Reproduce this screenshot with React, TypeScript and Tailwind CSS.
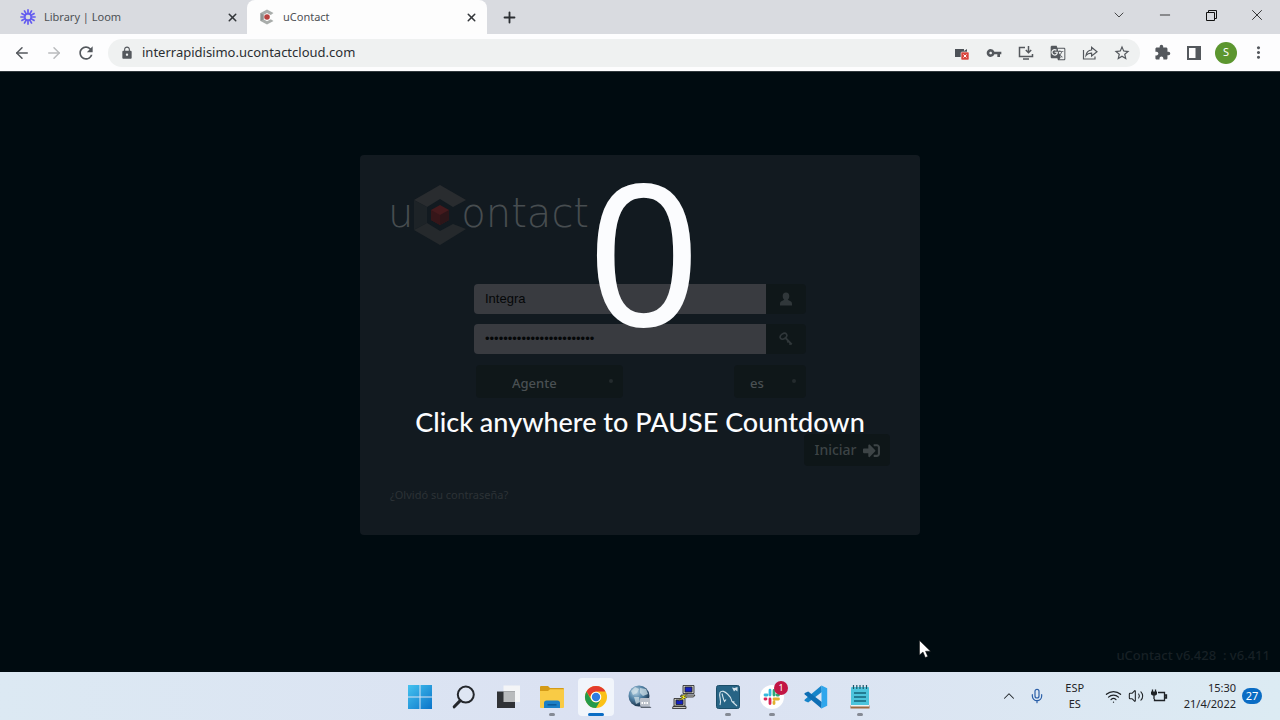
import { type ReactNode } from 'react';
import {
    ArrowLeft,
    ArrowRight,
    ChevronDown,
    ChevronUp,
    Mic,
    Minus,
    Plus,
    Volume2,
    Wifi,
    X,
} from 'lucide-react';
import { FaSignInAlt } from 'react-icons/fa';
import {
    MdExtension,
    MdGTranslate,
    MdLock,
    MdMoreVert,
    MdRefresh,
    MdStarBorder,
    MdVpnKey,
} from 'react-icons/md';

type IconButtonProperties = {
    label: string;
    className?: string;
    children: ReactNode;
};

const IconButton: React.FC<IconButtonProperties> = ({
    label,
    className = 'w-8 h-8',
    children,
}) => (
    <button
        type="button"
        aria-label={label}
        className={`flex shrink-0 items-center justify-center ${className}`}
    >
        {children}
    </button>
);

const LoomIcon: React.FC = () => (
    <svg viewBox="0 0 16 16" className="h-4 w-4" stroke="#635bf0" strokeWidth="1.7">
        {[0, 30, 60, 90, 120, 150].map((angle) => (
            <path
                key={angle}
                d="M8 0.3V5.4M8 10.6V15.7"
                transform={`rotate(${angle} 8 8)`}
            />
        ))}
        <circle cx="8" cy="8" r="3.2" fill="none" strokeWidth="1.4" />
    </svg>
);

const ContactFavicon: React.FC = () => (
    <svg viewBox="0 0 16 16" className="h-4 w-4">
        <path d="M8 0.5L14.5 4L11.8 6L8 4L4.6 6V10.2L8 12.2L11.8 10.2L14.5 12L8 15.6L1.5 12V4Z" fill="#a9adab" />
        <path d="M1.5 4L4.6 6V10.2L1.5 12Z" fill="#8e9391" />
        <circle cx="8" cy="8" r="2.8" fill="#b8423f" />
    </svg>
);

const TabStrip: React.FC = () => (
    <div className="flex h-[34px] bg-[#d9dbe0] text-[11px] text-[#4d5155]">
        <div className="flex w-[247px] items-center pl-5 pr-[7px]">
            <LoomIcon />
            <span className="ml-2 flex-1">Library | Loom</span>
            <IconButton label="Close Library tab" className="h-4 w-4">
                <X size={13} strokeWidth={2.8} color="#33363a" />
            </IconButton>
        </div>
        <div className="flex w-[240px] items-center rounded-t-lg bg-[#fdfdfd] pl-3 pr-2">
            <ContactFavicon />
            <span className="ml-2 flex-1">uContact</span>
            <IconButton label="Close uContact tab" className="h-4 w-4">
                <X size={13} strokeWidth={2.8} color="#33363a" />
            </IconButton>
        </div>
        <IconButton label="New tab" className="ml-2 w-7">
            <Plus size={17} strokeWidth={2.6} color="#2c2f33" />
        </IconButton>
        <div className="ml-auto flex pb-1 text-[#222]">
            <IconButton label="Search tabs" className="w-[46px]">
                <ChevronDown size={16} strokeWidth={1.2} />
            </IconButton>
            <IconButton label="Minimize" className="w-[46px]">
                <Minus size={16} strokeWidth={1.3} />
            </IconButton>
            <IconButton label="Restore" className="w-[46px]">
                <svg viewBox="0 0 11 11" className="h-[11px] w-[11px]" fill="none" stroke="#111">
                    <path d="M0.5 2.5H8.5V10.5H0.5ZM2.5 2.5V0.5H10.5V8.5H8.5" />
                </svg>
            </IconButton>
            <IconButton label="Close" className="w-[46px]">
                <X size={18} strokeWidth={1.2} />
            </IconButton>
        </div>
    </div>
);

const Toolbar: React.FC = () => (
    <div className="flex h-[37px] items-center bg-[#fdfdfe] px-1.5 text-[#54585d]">
        <IconButton label="Back">
            <ArrowLeft size={18} strokeWidth={2} />
        </IconButton>
        <IconButton label="Forward">
            <ArrowRight size={18} strokeWidth={2} color="#b9bbbd" />
        </IconButton>
        <IconButton label="Reload">
            <MdRefresh size={20} />
        </IconButton>
        <div className="mx-1.5 flex h-7 flex-1 items-center rounded-full bg-[#eff1f1] pl-3 pr-0.5">
            <MdLock size={14} />
            <input
                aria-label="Address"
                defaultValue="interrapidisimo.ucontactcloud.com"
                className="ml-2 min-w-0 flex-1 bg-transparent text-[13px] text-[#2b2e31] outline-none"
            />
            <IconButton label="Camera blocked">
                <svg viewBox="0 0 16 16" className="h-4 w-4">
                    <path d="M1 4H10V6L13 4V12H1Z" fill="#4c5157" />
                    <rect x="7" y="7" width="8" height="8" rx="1" fill="#d9443c" stroke="#eff1f1" strokeWidth="0.6" />
                    <path d="M9.5 9.5L12.5 12.5M12.5 9.5L9.5 12.5" stroke="#fff" />
                </svg>
            </IconButton>
            <IconButton label="Passwords">
                <MdVpnKey size={16} />
            </IconButton>
            <IconButton label="Install app">
                <svg viewBox="0 0 16 16" className="h-4 w-4" fill="none" stroke="currentColor" strokeWidth="1.5">
                    <path d="M7 2.5H1.5V11.5H14.5V9M5 14H11M10.5 1V7.5M7.8 5L10.5 7.7L13.2 5" />
                </svg>
            </IconButton>
            <IconButton label="Translate">
                <MdGTranslate size={16} />
            </IconButton>
            <IconButton label="Share">
                <svg viewBox="0 0 16 16" className="h-4 w-4" fill="none" stroke="currentColor" strokeWidth="1.2">
                    <path d="M1.5 5V14H13V11.5M4 10.5C4.5 6.8 6.5 5.2 9.6 5V2.2L15 6.8L9.6 11V8.2C7 8.1 5.2 8.9 4 10.5Z" />
                </svg>
            </IconButton>
            <IconButton label="Bookmark">
                <MdStarBorder size={18} />
            </IconButton>
        </div>
        <IconButton label="Extensions">
            <MdExtension size={17} />
        </IconButton>
        <IconButton label="Side panel">
            <svg viewBox="0 0 14 14" className="h-3.5 w-3.5">
                <path d="M0 0H14V14H0ZM2 2V12H8.5V2Z" fill="currentColor" fillRule="evenodd" />
            </svg>
        </IconButton>
        <IconButton label="Profile">
            <span className="flex h-[22px] w-[22px] items-center justify-center rounded-full bg-[#5c962f] text-[11px] text-white">
                S
            </span>
        </IconButton>
        <IconButton label="Menu">
            <MdMoreVert size={19} />
        </IconButton>
    </div>
);

const Logo: React.FC = () => (
    <div className="flex h-[60px] items-center font-['DejaVu_Sans'] text-[40px] font-extralight leading-none text-[#474d50]">
        <span className="-ml-0.5 pb-1">u</span>
        <svg viewBox="0 0 54 60" className="h-[60px] w-[54px]">
            <path d="M27 0L53 15L40 22L27 14L14 22L1 15Z" fill="#292c2f" />
            <path d="M1 15L14 22V38L1 45Z" fill="#1d2327" />
            <path d="M1 45L14 38L27 46L40 39L53 44L27 60Z" fill="#25292c" />
            <path d="M27 20L36 25V35L27 40L18 35V25Z" fill="#451a1d" />
            <path d="M18 25L27 30V40L18 35Z" fill="#361619" />
            <path d="M27 30L36 25V35L27 40Z" fill="#2c1518" />
        </svg>
        <span className="-ml-1.5 pb-1">ontact</span>
    </div>
);

const UserIcon: React.FC = () => (
    <svg viewBox="0 0 14 14" className="h-3.5 w-3.5" fill="#30373a">
        <path d="M7 0.5C9.2 0.5 10.3 2 10.3 4C10.3 5.6 9.7 7 8.8 7.8L9.6 8.2L12 9.6C12.7 10 13 11 13 12V13.5H1V12C1 11 1.3 10 2 9.6L4.4 8.2L5.2 7.8C4.3 7 3.7 5.6 3.7 4C3.7 2 4.8 0.5 7 0.5Z" />
    </svg>
);

const KeyIcon: React.FC = () => (
    <svg viewBox="0 0 14 14" className="h-3.5 w-3.5" fill="none" stroke="#30373a">
        <ellipse cx="4.5" cy="4.2" rx="3.6" ry="2.5" strokeWidth="1.6" transform="rotate(-35 4.5 4.2)" />
        <path d="M6.5 6L12.8 12.3M8.3 10.3L10 8.6M10.4 12.6L12.3 10.8" strokeWidth="1.8" />
    </svg>
);

type FieldProperties = {
    label: string;
    type: string;
    value: string;
    icon: ReactNode;
};

const Field: React.FC<FieldProperties> = ({ label, type, value, icon }) => (
    <label className="flex h-[30px]">
        <input
            type={type}
            aria-label={label}
            defaultValue={value}
            className="min-w-0 flex-1 rounded-l bg-[#393b40] px-[11px] font-['Liberation_Sans'] text-[13px] text-[#050708] outline-none"
        />
        <span className="flex w-10 items-center justify-center rounded-r bg-[#0f1719]">
            {icon}
        </span>
    </label>
);

type PickerProperties = {
    label: string;
    value: string;
    className: string;
    selectClassName: string;
};

const Picker: React.FC<PickerProperties> = ({
    label,
    value,
    className,
    selectClassName,
}) => (
    <label className={`flex h-[33px] rounded bg-[#0f1719] ${className}`}>
        <select
            aria-label={label}
            className={`min-w-0 flex-1 appearance-none bg-transparent pt-1 text-[13px] font-medium text-[#4a5053] outline-none ${selectClassName}`}
        >
            <option>{value}</option>
        </select>
        <span className="mr-2.5 mt-3.5 h-1 w-1 rounded-full bg-[#242b2e]" />
    </label>
);

const LoginCard: React.FC = () => (
    <form className="mx-auto mt-[83px] flex w-full max-w-[560px] flex-col rounded bg-[#121a20] p-[30px]">
        <Logo />
        <div className="mx-auto mt-[39px] flex w-[332px] flex-col gap-2.5">
            <Field label="Usuario" type="text" value="Integra" icon={<UserIcon />} />
            <Field
                label="Clave"
                type="password"
                value="integra-contact-cloud-22"
                icon={<KeyIcon />}
            />
            <div className="flex justify-between pl-0.5 pt-px">
                <Picker label="Perfil" value="Agente" className="w-[147px]" selectClassName="pl-9" />
                <Picker label="Idioma" value="es" className="w-[72px]" selectClassName="pl-4" />
            </div>
        </div>
        <button
            type="button"
            className="mt-9 flex h-8 w-[86px] items-center justify-center gap-1.5 self-end rounded bg-[#0e1618] text-sm font-medium text-[#3d4446]"
        >
            Iniciar
            <FaSignInAlt size={17} />
        </button>
        <a href="#recuperar" className="mt-[19px] self-start text-[11px] leading-5 text-[#2c3236]">
            ¿Olvidó su contraseña?
        </a>
    </form>
);

const Countdown: React.FC = () => (
    <div className="absolute inset-0 flex flex-col items-center pt-[77px] text-[#fbfcfe]">
        <span className="pl-2 text-[198px] leading-[200px]">0</span>
        <p className="mt-[53px] font-['Lato'] text-[27px] font-medium leading-10">
            Click anywhere to PAUSE Countdown
        </p>
    </div>
);

const Page: React.FC = () => (
    <main className="relative flex flex-1 flex-col border-t border-[#30383c] bg-[#000b10]">
        <LoginCard />
        <p className="mt-auto self-end whitespace-pre pb-[7px] pr-2.5 text-[13px] font-medium text-[#172025]">
            uContact v6.428  : v6.411
        </p>
        <Countdown />
        <svg viewBox="0 0 12 19" className="absolute left-[919px] top-[568px] h-[19px] w-3">
            <path d="M0.5 0.5V15L4 12L6.3 17.5L8.8 16.5L6.5 11.2H11.5Z" fill="#fff" stroke="#111" strokeWidth="0.5" />
        </svg>
    </main>
);

const WindowsIcon: React.FC = () => (
    <svg viewBox="0 0 24 24" className="h-6 w-6">
        <defs>
            <linearGradient id="win" x1="0" y1="0" x2="1" y2="1" gradientUnits="objectBoundingBox">
                <stop offset="0" stopColor="#45c3f0" />
                <stop offset="1" stopColor="#0b74c9" />
            </linearGradient>
        </defs>
        <path d="M0 0H11.5V11.5H0ZM12.5 0H24V11.5H12.5ZM0 12.5H11.5V24H0ZM12.5 12.5H24V24H12.5Z" fill="url(#win)" />
    </svg>
);

const SearchIcon: React.FC = () => (
    <svg viewBox="0 0 24 24" className="h-6 w-6" fill="none" stroke="#24272c">
        <circle cx="13.8" cy="9.6" r="8" strokeWidth="2" fill="#dfe6f3" />
        <path d="M8.2 15.6L2.2 21.8" strokeWidth="3" strokeLinecap="round" />
    </svg>
);

const TaskViewIcon: React.FC = () => (
    <svg viewBox="0 0 24 24" className="h-6 w-6">
        <path d="M7.5 0.5H24V17H7.5Z" fill="#f4f5f7" />
        <path d="M1 6.5H19V23H1Z" fill="#303236" />
        <path d="M7.5 6.5H19V17H7.5Z" fill="#b9bbbd" />
    </svg>
);

const ExplorerIcon: React.FC = () => (
    <svg viewBox="0 0 26 24" className="h-6 w-[26px]">
        <path d="M1 2Q1 1 2 1H9L11 3H24Q25 3 25 4V10H1Z" fill="#d49b18" />
        <path d="M1 6H9L11 4.2H25V22Q25 23 24 23H2Q1 23 1 22Z" fill="#f9cb45" />
        <path d="M5 23V18Q5 15.5 7.5 15.5H18.5Q21 15.5 21 18V23Z" fill="#1b7fc6" />
        <path d="M8.5 19H17.5V20.6H8.5Z" fill="#0c5a9b" />
    </svg>
);

const ChromeIcon: React.FC = () => (
    <svg viewBox="0 0 24 24" className="h-6 w-6">
        <circle cx="12" cy="12" r="11" fill="#fbc116" />
        <path d="M2.47 6.5A11 11 0 0 1 21.53 6.5H12A5.5 5.5 0 0 0 7.24 9.25L6 12Z" fill="#e33b2e" />
        <path d="M2.47 6.5A11 11 0 0 0 12 23L16.76 14.75A5.5 5.5 0 0 1 7.24 14.75Z" fill="#249a4b" />
        <circle cx="12" cy="12" r="5.3" fill="#fff" />
        <circle cx="12" cy="12" r="4.2" fill="#2f7de1" />
    </svg>
);

const GlobeIcon: React.FC = () => (
    <svg viewBox="0 0 24 24" className="h-6 w-6">
        <defs>
            <radialGradient id="globe" cx="0.35" cy="0.3" r="0.75">
                <stop offset="0" stopColor="#b9d5e6" />
                <stop offset="0.5" stopColor="#4f80a4" />
                <stop offset="1" stopColor="#14293f" />
            </radialGradient>
        </defs>
        <circle cx="11" cy="11" r="10.5" fill="url(#globe)" />
        <path d="M3 6L7 2L11 4L9 8L5 10ZM12 3L18 4L20 9L15 11L12 8ZM6 12L11 12L12 17L8 19Z" fill="#d5e4ea" opacity="0.7" />
        <rect x="12" y="13" width="10" height="8" rx="1" fill="#b9bfc8" />
        <path d="M13.5 18H20.5" stroke="#fff" strokeWidth="2" strokeDasharray="1.5 1" />
        <path d="M12 21.5L22 21.5L23.5 23H13Z" fill="#5b6470" />
    </svg>
);

const PuttyIcon: React.FC = () => (
    <svg viewBox="0 0 24 24" className="h-6 w-6" strokeWidth="0.8" stroke="#222">
        <path d="M11 0.5H22V8.5H11ZM9 10H23L21.5 12H9Z" fill="#c9c9c3" />
        <path d="M13 2H20V7H13Z" fill="#1420c0" />
        <path d="M2 13.5H13V21H2ZM1 21.5H14V23.5H0.5Z" fill="#c9c9c3" />
        <path d="M4 15H11V19.5H4Z" fill="#1420c0" />
        <path d="M16 8.5L8 11.5L11 12.2L6 16L15 12.5L12 11.5Z" fill="#f7ec17" strokeWidth="0.4" />
    </svg>
);

const WorkbenchIcon: React.FC = () => (
    <svg viewBox="0 0 24 24" className="h-6 w-6" fill="none">
        <rect x="0.5" y="0.5" width="23" height="23" rx="2" fill="#276485" stroke="#1d4e69" />
        <path
            d="M4 20C6 16 2.5 11 4 7.5C5.5 5 9 6.5 11.5 9C14.5 11.5 15.5 14 16 16.5L21 21M16 16.5L18.5 17M6 8.5C7 12 7 14 8.5 16.5L10 14.5"
            stroke="#d6e4ec"
            strokeWidth="1.1"
        />
        <path d="M16 2.5L18.5 3L21.5 2V6.5L19.5 5L18 6.5Z" fill="#d6e4ec" />
    </svg>
);

const SlackIcon: React.FC = () => (
    <span className="relative">
        <svg viewBox="0 0 24 24" className="h-6 w-6" strokeWidth="2.8" strokeLinecap="round">
            <circle cx="12" cy="12" r="12" fill="#fff" />
            <path d="M10 5.2V10M5 10H7" stroke="#36b9dc" />
            <path d="M14 5.5V10M18.5 10H17" stroke="#2fa777" />
            <path d="M14 14H18.5M14 18.5V17" stroke="#e3b02e" />
            <path d="M5 14H6M10 14V18.5" stroke="#da2457" />
        </svg>
        <span className="absolute -right-1 -top-1 flex h-3.5 w-3.5 items-center justify-center rounded-full bg-[#c21544] text-[9px] text-white">
            1
        </span>
    </span>
);

const CodeIcon: React.FC = () => (
    <svg viewBox="0 0 24 24" className="h-6 w-6">
        <path d="M17.5 0.5L17.8 7L4.2 17.6L0.8 16Q0 15.3 0.8 14.6Z" fill="#1684c9" />
        <path d="M17.5 23.5L17.8 17L4.2 6.4L0.8 8Q0 8.7 0.8 9.4Z" fill="#0e6eb4" />
        <path d="M17.5 0.5L23.2 3.2V20.8L17.5 23.5Q16.8 23.5 17.5 21Z" fill="#2fa6ec" />
    </svg>
);

const NotepadIcon: React.FC = () => (
    <svg viewBox="0 0 20 24" className="h-6 w-5">
        <path d="M1 3Q1 2 2 2H18Q19 2 19 3V21H1Z" fill="#4cc4dc" />
        <path d="M0.5 20.5H19.5V23.5H0.5Z" fill="#9c6a43" />
        <path d="M1 20H19V21.5H1Z" fill="#f1f1f1" />
        <path d="M4 8H16M4 12H16M4 16H16" stroke="#14647b" strokeWidth="1.6" />
        <path d="M3.5 0V4M6.8 0V4M10 0V4M13.2 0V4M16.5 0V4" stroke="#1d5568" strokeWidth="1.2" />
    </svg>
);

const BatteryIcon: React.FC = () => (
    <svg viewBox="0 0 18 14" className="h-3.5 w-[18px]" fill="none" stroke="#1f2327" strokeWidth="1.3">
        <path d="M8 3.5H14.5V11.5H4.5V10M15 6V9H16.5V6Z" />
        <path d="M2.5 0.5V3M5.5 0.5V3M4 6V10" />
        <path d="M1 2.5H7V4.5Q7 6.5 4 6.5Q1 6.5 1 4.5Z" fill="#1f2327" stroke="none" />
    </svg>
);

const TASKBAR_APPS = [
    { name: 'Start', icon: <WindowsIcon />, state: 'closed' },
    { name: 'Search', icon: <SearchIcon />, state: 'closed' },
    { name: 'Task view', icon: <TaskViewIcon />, state: 'closed' },
    { name: 'File Explorer', icon: <ExplorerIcon />, state: 'open' },
    { name: 'Chrome', icon: <ChromeIcon />, state: 'active' },
    { name: 'Network', icon: <GlobeIcon />, state: 'closed' },
    { name: 'PuTTY', icon: <PuttyIcon />, state: 'closed' },
    { name: 'MySQL Workbench', icon: <WorkbenchIcon />, state: 'open' },
    { name: 'Slack', icon: <SlackIcon />, state: 'open' },
    { name: 'Visual Studio Code', icon: <CodeIcon />, state: 'closed' },
    { name: 'Notepad', icon: <NotepadIcon />, state: 'open' },
];

const INDICATOR: Record<string, string> = {
    closed: 'w-1.5',
    open: 'w-1.5 bg-[#858a94]',
    active: 'w-4 bg-[#0a6cc4]',
};

const Taskbar: React.FC = () => (
    <footer className="grid h-12 grid-cols-[1fr_auto_1fr] items-center bg-linear-to-r from-[#dce9f3] via-[#dbe1f2] to-[#dcebf3] text-[#1f2327]">
        <div />
        <nav className="flex">
            {TASKBAR_APPS.map(({ name, icon, state }) => (
                <button
                    key={name}
                    type="button"
                    aria-label={name}
                    className="flex h-12 w-11 items-center justify-center pt-px"
                >
                    <span
                        className={`flex h-[38px] w-9 flex-col items-center justify-end gap-1 rounded ${state === 'active' ? 'bg-[#f1f5fb]' : ''}`}
                    >
                        {icon}
                        <span className={`h-[3px] shrink-0 rounded-full ${INDICATOR[state]}`} />
                    </span>
                </button>
            ))}
        </nav>
        <div className="flex items-center justify-end pr-[18px] leading-4">
            <IconButton label="Hidden icons" className="h-8 w-7">
                <ChevronUp size={18} strokeWidth={1.4} />
            </IconButton>
            <IconButton label="Microphone" className="h-8 w-7">
                <Mic size={16} strokeWidth={1.8} color="#2a5fa8" />
            </IconButton>
            <button type="button" className="ml-2 w-8 text-center text-[11px]">
                ESP
                <br />
                ES
            </button>
            <button type="button" aria-label="Network, sound and battery" className="ml-3.5 flex items-center gap-1.5">
                <Wifi size={17} strokeWidth={1.8} />
                <Volume2 size={16} strokeWidth={1.6} />
                <BatteryIcon />
            </button>
            <time dateTime="2022-04-21T15:30" className="ml-4 text-right text-[11px]">
                15:30
                <br />
                21/4/2022
            </time>
            <span className="ml-1.5 flex h-4 w-5 items-center justify-center rounded-full bg-[#0a6cc4] text-[11px] text-white">
                27
            </span>
        </div>
    </footer>
);

const App: React.FC = () => (
    <div className="flex min-h-screen flex-col font-['Noto_Sans',sans-serif]">
        <header>
            <TabStrip />
            <Toolbar />
        </header>
        <Page />
        <Taskbar />
    </div>
);

export default App;
